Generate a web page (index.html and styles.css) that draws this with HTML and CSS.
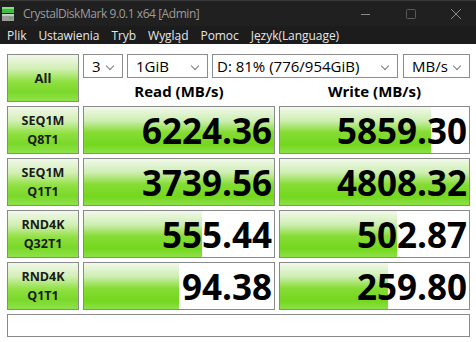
FILE: index.html
```html
<!DOCTYPE html>
<html lang="pl">
<head>
    <meta charset="UTF-8">
    <title>CrystalDiskMark 9.0.1 x64 [Admin]</title>
    <link rel="stylesheet" href="styles.css">
</head>
<body>
    <div class="titlebar">
        <svg class="app-icon" width="14" height="16" viewBox="0 0 14 16">
            <rect x="1" y="1" width="12" height="6" fill="#3fbf3f"/>
            <rect x="1" y="1" width="12" height="2" fill="#7fe07f"/>
            <rect x="1" y="8" width="12" height="7" fill="#9a9a9a"/>
            <rect x="1" y="8" width="12" height="2" fill="#c8c8c8"/>
            <rect x="8" y="11" width="3" height="2" fill="#3fbf3f"/>
        </svg>
        <span class="title">CrystalDiskMark 9.0.1 x64 [Admin]</span>
        <div class="win-controls">
            <svg width="12" height="12" viewBox="0 0 12 12"><line x1="1" y1="6.5" x2="10" y2="6.5" stroke="#8a8a8a" stroke-width="1"/></svg>
            <svg width="12" height="12" viewBox="0 0 12 12"><rect x="1.5" y="1.5" width="9" height="9" rx="1" fill="none" stroke="#5a5a5a" stroke-width="1"/></svg>
            <svg width="12" height="12" viewBox="0 0 12 12"><path d="M1 1 L11 11 M11 1 L1 11" stroke="#8a8a8a" stroke-width="1"/></svg>
        </div>
    </div>
    <div class="menubar">
        <span>Plik</span>
        <span>Ustawienia</span>
        <span>Tryb</span>
        <span>Wygląd</span>
        <span>Pomoc</span>
        <span>Język(Language)</span>
    </div>

    <div class="main">
        <div class="top">
            <div class="btn all-btn">All</div>
            <div class="top-right">
                <div class="selects">
                    <div class="select sel-count">3<span class="chev"></span></div>
                    <div class="select sel-size">1GiB<span class="chev"></span></div>
                    <div class="select sel-drive">D: 81% (776/954GiB)<span class="chev"></span></div>
                    <div class="select sel-unit">MB/s<span class="chev"></span></div>
                </div>
                <div class="headers">
                    <div class="head read-col">Read (MB/s)</div>
                    <div class="head write-col">Write (MB/s)</div>
                </div>
            </div>
        </div>

        <div class="row">
            <div class="btn label">SEQ1M<br>Q8T1</div>
            <div class="cell read-col"><div class="bar" style="width: 100%"></div><span class="value">6224.36</span></div>
            <div class="cell write-col"><div class="bar" style="width: 80%"></div><span class="value">5859.30</span></div>
        </div>
        <div class="row">
            <div class="btn label">SEQ1M<br>Q1T1</div>
            <div class="cell read-col"><div class="bar" style="width: 100%"></div><span class="value">3739.56</span></div>
            <div class="cell write-col"><div class="bar" style="width: 100%"></div><span class="value">4808.32</span></div>
        </div>
        <div class="row">
            <div class="btn label">RND4K<br>Q32T1</div>
            <div class="cell read-col"><div class="bar" style="width: 62%"></div><span class="value">555.44</span></div>
            <div class="cell write-col"><div class="bar" style="width: 62%"></div><span class="value">502.87</span></div>
        </div>
        <div class="row">
            <div class="btn label">RND4K<br>Q1T1</div>
            <div class="cell read-col"><div class="bar" style="width: 50%"></div><span class="value">94.38</span></div>
            <div class="cell write-col"><div class="bar" style="width: 57%"></div><span class="value">259.80</span></div>
        </div>

        <div class="comment"></div>
    </div>
</body>
</html>
```

FILE: styles.css
```css
body {
    margin: 0;
    width: 476px;
    height: 342px;
    overflow: hidden;
    background-color: #ffffff;
    font-family: "Open Sans", "Noto Sans", sans-serif;
    color: #000;
}

/* window chrome */
.titlebar {
    display: flex;
    align-items: center;
    height: 26px;
    background-color: #202020;
    border-top: 1px solid #3a3a3a;
    box-sizing: border-box;
}

.app-icon {
    margin: 0 8px 0 1px;
}

.title {
    font-size: 12px;
    letter-spacing: -0.45px;
    color: #9c9c9c;
}

.win-controls {
    margin-left: auto;
    display: flex;
    gap: 33px;
    padding-right: 14px;
}

.menubar {
    display: flex;
    align-items: center;
    height: 18px;
    padding-left: 7px;
    gap: 12px;
    background-color: #1c1c1c;
    font-size: 12px;
    letter-spacing: -0.05px;
    color: #e6e6e6;
}

/* benchmark area */
.main {
    padding: 10px 6px 0 7px;
    display: flex;
    flex-direction: column;
    gap: 4px;
}

.top {
    display: flex;
    gap: 4px;
}

.btn {
    box-sizing: border-box;
    width: 72px;
    height: 48px;
    border: 1px solid #8a8a8a;
    background: linear-gradient(to bottom, #f0f8ea 0%, #d2efb4 30%, #8fe040 58%, #7ad82a 80%, #8fe24a 100%);
    display: flex;
    align-items: center;
    justify-content: center;
    text-align: center;
    font-weight: bold;
    font-size: 12.5px;
    color: #1a1a1a;
}

.all-btn {
    font-size: 13px;
}

.label {
    line-height: 19px;
}

.top-right {
    display: flex;
    flex-direction: column;
}

.selects {
    display: flex;
    gap: 4px;
    height: 24px;
}

.select {
    box-sizing: border-box;
    height: 24px;
    border: 1px solid #8c8c8c;
    background-color: #fff;
    font-size: 15px;
    line-height: 22px;
    padding-left: 8px;
    position: relative;
    white-space: nowrap;
}

.chev {
    position: absolute;
    right: 9px;
    top: 8px;
    width: 5px;
    height: 5px;
    border-right: 1px solid #7a7a7a;
    border-bottom: 1px solid #7a7a7a;
    transform: rotate(45deg);
}

.sel-count { width: 40px; }
.sel-size { width: 81px; }
.sel-drive { width: 186px; padding-left: 4px; }
.sel-unit { width: 67px; margin-left: 1px; }

.headers {
    display: flex;
    gap: 4px;
    height: 24px;
}

.head {
    text-align: center;
    font-weight: bold;
    font-size: 15px;
    line-height: 22px;
    padding-top: 2px;
}

.read-col { width: 192px; }
.write-col { width: 191px; }

.row {
    display: flex;
    gap: 4px;
    height: 48px;
}

.cell {
    box-sizing: border-box;
    height: 48px;
    border: 1px solid #8a8a8a;
    background-color: #fff;
    position: relative;
    display: flex;
    align-items: center;
    justify-content: flex-end;
}

.bar {
    position: absolute;
    left: 0;
    top: 0;
    bottom: 0;
    background: linear-gradient(to bottom, #f2f9ec 0%, #cdeeb0 30%, #86dc34 55%, #74d71e 82%, #8de148 100%);
}

.value {
    position: relative;
    font-weight: bold;
    font-size: 35px;
    line-height: 1;
    padding-right: 2px;
}

.comment {
    box-sizing: border-box;
    height: 23px;
    width: 463px;
    border: 1px solid #8a8a8a;
    background-color: #fff;
}
```
